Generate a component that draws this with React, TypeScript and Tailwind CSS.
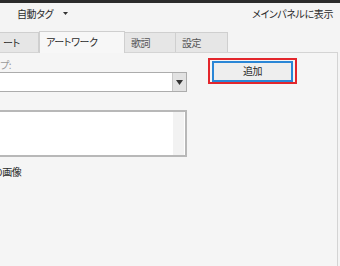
import React from "react";

const font = { fontFamily: '"Noto Sans CJK JP", "Noto Sans", sans-serif', fontFeatureSettings: '"palt"' } as React.CSSProperties;

export default function App() {
  return (
    <div className="w-[340px] h-[266px] bg-[#f4f4f4] flex flex-col overflow-hidden text-[10px] tracking-[-0.4px] text-[#2a2a2a]" style={font}>
      <div className="h-[3px] bg-[#2b2b2b] shrink-0" />
      <div className="h-[21px] shrink-0 flex items-center justify-between pl-[17px] pr-[7px] leading-[14px]">
        <div className="flex items-center">
          <span>自動タグ</span>
          <svg className="ml-[10px]" width="5" height="3" viewBox="0 0 5 3"><path d="M0 0H5L2.5 3Z" fill="#333" /></svg>
        </div>
        <span>メインパネルに表示</span>
      </div>
      <div className="h-[6px] shrink-0" />
      <div className="h-[22px] shrink-0 flex items-end relative z-10">
        <div className="w-[39px] h-[20px] bg-[#e6e6e6] border border-b-0 border-[#cfcfcf] border-l-0 flex items-center pl-[3px] leading-[14px]">ート</div>
        <div className="w-[86px] h-[22px] bg-[#f7f7f7] border border-b-0 border-[#cfcfcf] flex items-center pl-[6px] leading-[14px] mb-[-1px] pb-[1px]">アートワーク</div>
        <div className="w-[51px] h-[20px] bg-[#e6e6e6] border border-b-0 border-l-0 border-[#cfcfcf] flex items-center pl-[6px] leading-[14px] text-[#555]">歌詞</div>
        <div className="w-[52px] h-[20px] bg-[#e6e6e6] border border-b-0 border-l-0 border-[#cfcfcf] flex items-center pl-[6px] leading-[14px] text-[#555]">設定</div>
      </div>
      <div className="w-[338px] flex-1 border-t border-r border-[#d4d4d4] bg-[#f5f5f5] grid grid-cols-[187px_auto] gap-x-[21px]">
        <div className="flex flex-col pt-[6px]">
          <div className="leading-[12px] h-[12px] text-[#9a9a9a]">プ:</div>
          <div className="mt-[1px] h-[20px] bg-white border border-[#acacac] border-l-0 flex justify-end">
            <div className="w-[14px] h-full bg-[#e2e2e2] border-l border-[#c8c8c8] flex items-center justify-center">
              <svg width="7" height="5" viewBox="0 0 7 5"><path d="M0 0H7L3.5 5Z" fill="#333" /></svg>
            </div>
          </div>
          <div className="mt-[18px] h-[47px] bg-white border-2 border-[#b8b8b8] border-l-0 flex justify-end">
            <div className="w-[11px] h-full bg-[#f2f2f2] mr-[1px]" />
          </div>
          <div className="mt-[9px] leading-[12px] ml-[-7px] text-[#2a2a2a]">の画像</div>
        </div>
        <div className="pt-[5px]">
          <div className="w-[89px] h-[26px] border-2 border-[#e3262c] flex items-center justify-center">
            <div className="w-[81px] h-[21px] border-2 border-[#2a86d6] bg-[#eeeeee] flex items-center justify-center leading-[12px] text-[10px]">追加</div>
          </div>
        </div>
      </div>
    </div>
  );
}
